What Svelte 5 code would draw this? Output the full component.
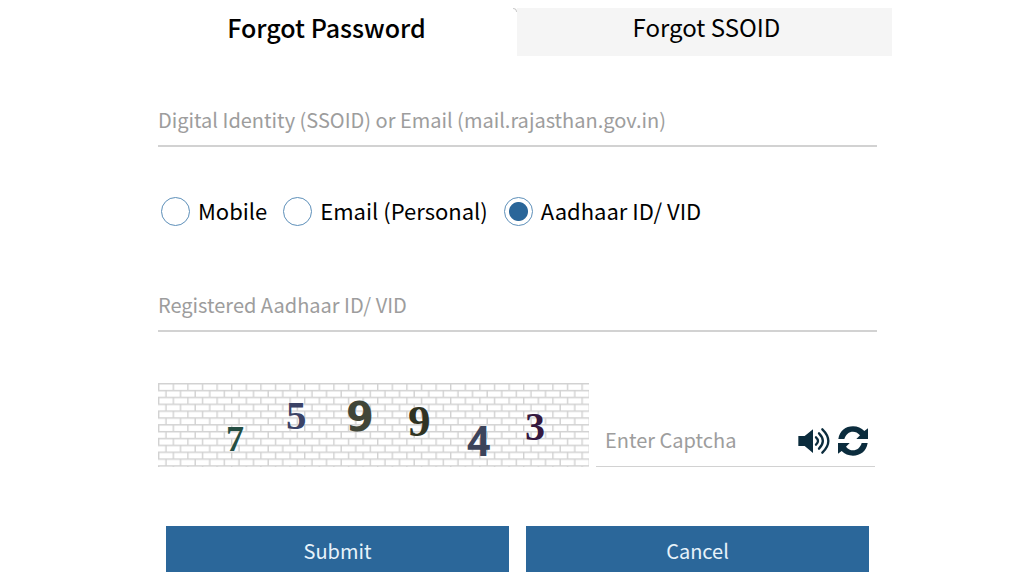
<script>
  let method = $state('aadhaar');
  const methods = [
    { id: 'mobile', label: 'Mobile' },
    { id: 'email', label: 'Email (Personal)' },
    { id: 'aadhaar', label: 'Aadhaar ID/ VID' }
  ];
</script>

<main>
  <nav class="tabs" aria-label="Account recovery">
    <button type="button" class="tab active">Forgot Password</button>
    <button type="button" class="tab">Forgot SSOID</button>
  </nav>

  <form onsubmit={(event) => event.preventDefault()}>
    <input class="field" type="text" aria-label="Digital Identity (SSOID) or Email" placeholder="Digital Identity (SSOID) or Email (mail.rajasthan.gov.in)" />

    <div class="methods" role="radiogroup" aria-label="Recovery method">
      {#each methods as item}
        <label>
          <input type="radio" name="method" value={item.id} bind:group={method} />
          <span>{item.label}</span>
        </label>
      {/each}
    </div>

    <input class="field" type="text" aria-label="Registered Aadhaar ID/ VID" placeholder="Registered Aadhaar ID/ VID" />

    <div class="captcha">
      <svg class="challenge" viewBox="0 0 431 84" role="img" aria-label="Captcha">
        <defs>
          <pattern id="bricks" width="14.6" height="13.7" patternUnits="userSpaceOnUse">
            <path d="M0 .7H14.6M0 7.5H14.6M.7 .7V7.5M8 7.5V13.7" fill="none" stroke="#d2d2d2" stroke-width="1.4" />
          </pattern>
        </defs>
        <rect width="431" height="84" fill="url(#bricks)" />
        <text class="serif" x="68" y="68" font-size="36" fill="#254f43">7</text>
        <text class="serif" x="128" y="46" font-size="41" fill="#3b4366">5</text>
        <text class="sans" x="188" y="48" font-size="40" fill="#414638">9</text>
        <text class="serif" x="250" y="53" font-size="45" fill="#303322">9</text>
        <text class="round" x="309" y="73" font-size="41" fill="#3c445b">4</text>
        <text class="serif" x="367" y="57" font-size="40" fill="#35183f">3</text>
      </svg>
      <div class="entry">
        <input type="text" aria-label="Enter Captcha" placeholder="Enter Captcha" />
        <button type="button" class="icon" aria-label="Play captcha audio">
          <svg viewBox="0 0 96 96" width="32" height="32">
            <path d="M1 33H20L45 13V84L20 63H1Z" fill="#0b2c3d" />
            <path d="M54 37Q66 48 54 59M63 25Q86 48 63 71M73 13Q109 48 73 83" fill="none" stroke="#0b2c3d" stroke-width="7" stroke-linecap="round" />
          </svg>
        </button>
        <button type="button" class="icon" aria-label="Refresh captcha">
          <svg viewBox="0 0 96 96" width="32" height="32">
            <path id="arrow" d="M4 42C8 17 26 4 48 4C62 4 73 9 82 18L93 10V42H58L69 31C62 23 56 20 48 20C36 20 26 28 22 42Z" fill="#0b2c3d" />
            <use href="#arrow" transform="rotate(180 48 48)" />
          </svg>
        </button>
      </div>
    </div>

    <div class="actions">
      <button type="submit">Submit</button>
      <button type="button">Cancel</button>
    </div>
  </form>
</main>

<style>
  :global(body) {
    background: #fff;
    overflow: hidden;
  }
  main, input, button {
    font-family: "Noto Sans CJK SC", "Noto Sans", sans-serif;
  }
  main {
    padding: 8px 132px 0 142px;
    color: #000;
  }
  button {
    border: 0;
    cursor: pointer;
  }
  .tabs {
    display: grid;
    grid-template-columns: 1fr 1fr;
  }
  .tab {
    height: 48px;
    padding: 0 0 10px 4px;
    background: #f5f5f5;
    color: #000;
    font-size: 24px;
    line-height: 38px;
  }
  .tab.active {
    position: relative;
    background: #fff;
    font-weight: 500;
    font-size: 25px;
    padding: 0 6px 10px 0;
  }
  .tab.active::after {
    content: "";
    position: absolute;
    top: 0;
    right: 0;
    width: 4px;
    height: 4px;
    box-sizing: border-box;
    border-top: 1px solid #ccc;
    border-right: 1px solid #ccc;
    border-top-right-radius: 4px;
  }
  form {
    padding: 37px 15px 0 16px;
  }
  input {
    color: #333;
    font-size: 20px;
    border-radius: 0;
    outline: 0;
  }
  input::placeholder {
    color: #9d9d9d;
    opacity: 1;
  }
  .field {
    display: block;
    box-sizing: border-box;
    width: 100%;
    height: 54px;
    padding: 0;
    border: 0;
    border-bottom: 2px solid #d2d2d2;
    background: transparent;
  }
  .methods {
    display: flex;
    gap: 16px;
    padding: 48px 3px 51px;
  }
  label {
    display: flex;
    align-items: center;
    gap: 8px;
    height: 32px;
    font-size: 22px;
    line-height: 30px;
  }
  label span {
    padding-bottom: 2px;
  }
  input[type="radio"] {
    appearance: none;
    box-sizing: border-box;
    width: 29px;
    height: 29px;
    margin: 0;
    border: 1px solid #5d8fb9;
    border-radius: 50%;
    background: #fff;
  }
  input[type="radio"]:checked {
    background: radial-gradient(circle, #2a6699 9px, #fff 10px);
  }
  .captcha {
    display: grid;
    grid-template-columns: minmax(0, 431fr) minmax(0, 279fr);
    gap: 7px;
    padding: 51px 2px 0 0;
  }
  .challenge {
    display: block;
    width: 100%;
  }
  .serif {
    font-family: "Liberation Serif", serif;
    font-weight: 700;
  }
  .sans {
    font-family: "DejaVu Sans", sans-serif;
    font-weight: 700;
  }
  .round {
    font-family: "Open Sans", sans-serif;
    font-weight: 700;
  }
  .entry {
    display: flex;
    align-items: center;
    align-self: end;
    gap: 7px;
    height: 51px;
    padding: 0 6px 0 9px;
    border-bottom: 1px solid #d2d2d2;
  }
  .entry input {
    flex: 1;
    min-width: 0;
    padding: 0 0 2px;
    border: 0;
    background: transparent;
  }
  .icon {
    padding: 0;
    background: none;
  }
  .icon svg {
    display: block;
  }
  .actions {
    display: grid;
    grid-template-columns: 1fr 1fr;
    gap: 17px;
    padding: 59px 8px 0;
  }
  .actions button {
    height: 52px;
    padding: 0 0 2px;
    background: #2b679a;
    color: #e8f3fa;
    font-size: 20px;
    line-height: 50px;
  }
</style>
